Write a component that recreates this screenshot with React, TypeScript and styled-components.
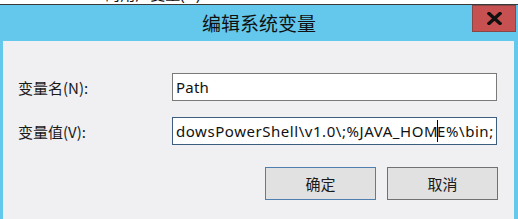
import React from "react";
import styled, { createGlobalStyle } from "styled-components";

const Global = createGlobalStyle`
  html, body { margin: 0; padding: 0; }
  body {
    width: 518px; height: 219px; overflow: hidden; background: #ffffff;
    font-family: "Noto Sans", "Noto Sans CJK SC", sans-serif;
  }
`;

const Screen = styled.div`
  width: 518px;
  height: 219px;
  overflow: hidden;
  display: flex;
  flex-direction: column;
`;

const BackStrip = styled.div`
  height: 4px;
  overflow: hidden;
  background: #ffffff;
  position: relative;
`;

const BackText = styled.div`
  font-size: 15px;
  line-height: 18px;
  color: #111;
  margin-top: -15px;
  padding-left: 4px;
  white-space: nowrap;
  font-family: "Noto Sans", "Noto Sans CJK SC", sans-serif;
`;

const Dialog = styled.div`
  flex: 1;
  border-top: 1px solid #3a3a3a;
  background: #63c8ec;
  display: flex;
  flex-direction: column;
  padding: 0 4px 0 3px;
  position: relative;
`;

const TitleBar = styled.div`
  height: 36px;
  display: flex;
  align-items: center;
  justify-content: center;
`;

const Title = styled.div`
  font-family: "Noto Sans CJK SC", sans-serif;
  font-size: 19px;
  color: #111;
  margin-top: -2px;
  margin-left: 1px;
`;

const CloseButton = styled.div`
  position: absolute;
  top: 0;
  left: 472px;
  width: 42px;
  height: 25px;
  background: #c75050;
  border: 1px solid #8a4545;
  display: flex;
  align-items: center;
  justify-content: center;
`;

const Client = styled.div`
  flex: 1;
  background: #f0eff2;
  padding: 32px 17px 0 15px;
  display: flex;
  flex-direction: column;
`;

const Form = styled.div`
  display: grid;
  grid-template-columns: 154px 325px;
  row-gap: 16px;
  align-items: center;
`;

const Label = styled.div`
  font-family: "Noto Sans CJK SC", sans-serif;
  font-size: 15px;
  color: #1a1a1a;
  white-space: nowrap;
`;

const Field = styled.div<{ $focused?: boolean }>`
  box-sizing: border-box;
  height: 28px;
  width: 325px;
  background: #ffffff;
  border: 1px solid ${(p) => (p.$focused ? "#3d5d80" : "#7a7a7a")};
  padding: 0 0 0 3px;
  display: flex;
  align-items: center;
  overflow: hidden;
  white-space: nowrap;
  font-family: "Noto Sans", sans-serif;
  font-size: 15px;
  letter-spacing: ${(p) => (p.$focused ? "0.55px" : "0.2px")};
  color: #111;
`;

const Caret = styled.span`
  display: inline-block;
  width: 1px;
  height: 22px;
  background: #000;
  vertical-align: middle;
  margin: 0 -1px 0 -1px;
`;

const Buttons = styled.div`
  margin-top: 22px;
  display: flex;
  justify-content: flex-end;
  gap: 11px;
  margin-right: -1px;
`;

const Button = styled.div<{ $default?: boolean }>`
  box-sizing: border-box;
  width: 111px;
  height: 33px;
  background: #e1e1e1;
  border: 1px solid ${(p) => (p.$default ? "#4f7fae" : "#717171")};
  display: flex;
  align-items: center;
  justify-content: center;
  font-family: "Noto Sans CJK SC", sans-serif;
  font-size: 15px;
  color: #1a1a1a;
`;

export default function App() {
  return (
    <Screen>
      <Global />
      <BackStrip>
        <BackText>Administrator 的用户变量(U)</BackText>
      </BackStrip>
      <Dialog>
        <TitleBar>
          <Title>编辑系统变量</Title>
        </TitleBar>
        <CloseButton>
          <svg width="15" height="13" viewBox="0 0 15 13">
            <path d="M2 1.5 L13 11.5 M13 1.5 L2 11.5" stroke="#111" strokeWidth="3.4" strokeLinecap="square" />
          </svg>
        </CloseButton>
        <Client>
          <Form>
            <Label>变量名(N):</Label>
            <Field>Path</Field>
            <Label>变量值(V):</Label>
            <Field $focused>
              dowsPowerShell\v1.0\;%JAVA_HOM<Caret />E%\bin;
            </Field>
          </Form>
          <Buttons>
            <Button $default>确定</Button>
            <Button>取消</Button>
          </Buttons>
        </Client>
      </Dialog>
    </Screen>
  );
}
